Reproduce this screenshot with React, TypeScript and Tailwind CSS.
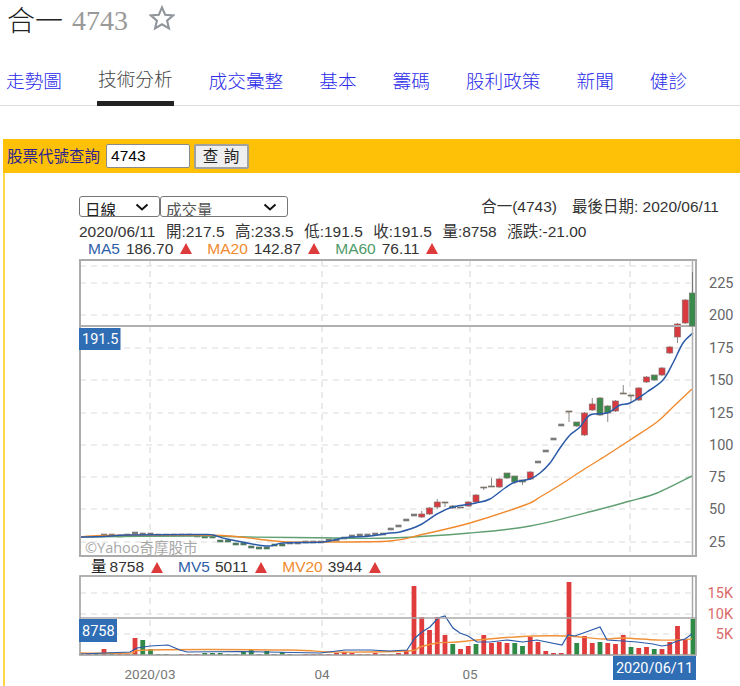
import React from "react";

type P = [number, number];
const X0 = 80.75;
const STEP = 7.75;
const xAt = (i: number) => X0 + STEP * i;

function smooth(pts: P[]) {
  let d = `M${pts[0][0]} ${pts[0][1]}`;
  for (let i = 0; i < pts.length - 1; i++) {
    const p0 = pts[Math.max(0, i - 1)];
    const p1 = pts[i];
    const p2 = pts[i + 1];
    const p3 = pts[Math.min(pts.length - 1, i + 2)];
    const c1x = p1[0] + (p2[0] - p0[0]) / 6;
    const c1y = p1[1] + (p2[1] - p0[1]) / 6;
    const c2x = p2[0] - (p3[0] - p1[0]) / 6;
    const c2y = p2[1] - (p3[1] - p1[1]) / 6;
    d += ` C${c1x.toFixed(1)} ${c1y.toFixed(1)} ${c2x.toFixed(1)} ${c2y.toFixed(1)} ${p2[0]} ${p2[1]}`;
  }
  return d;
}

const MA5: P[] = [[80,537],[103,536.5],[130,535],[200,534.5],[213,535],[227,539],[266,546],[283,543],[323,542],[343,538],[370,536],[390,533],[400,532],[420,525],[437,514],[453,507],[476,503],[490,499],[505,488],[515,482],[530,479],[540,473],[550,463],[560,448],[570,435],[580,427],[590,415],[607,413],[620,405],[630,403],[647,392],[663,380],[673,363],[683,343],[693,333]];
const MA20: P[] = [[80,537],[103,535.5],[186,535],[230,536],[257,539],[287,542],[323,542],[390,541],[420,535],[470,523],[525,505],[540,497],[560,485],[583,470],[607,455],[630,440],[657,422],[673,407],[692,389]];
const MA60: P[] = [[80,537],[200,536],[247,537],[337,538],[390,538],[470,533],[530,526],[597,510],[630,501],[657,493],[692,476]];

const DASHES: [number, number][] = [[3,535],[4,535],[5,536],[6,535],[7,533],[8,534],[9,534],[10,535],[11,535],[12,535],[13,535],[14,535],[15,536],[16,537],[17,537],[18,541],[19,541],[20,544],[21,544],[22,547],[23,548],[24,548],[25,545],[26,545],[27,543],[28,543],[29,542],[30,542],[31,542],[32,540],[33,540],[34,538],[35,536],[36,535],[37,535],[38,534],[39,534],[40,529],[41,526],[42,520],[43,515],[59,462],[60,451],[61,439],[62,425]];

// [index, top, bottom, wickTop, wickBottom, colour]
const CANDLES: [number, number, number, number, number, "r" | "g"][] = [
  [44,514,517,511,518,"r"],[45,508,514,507,515,"r"],[46,502,507,499,509,"r"],[47,502,503,502,507,"g"],[48,506,508,505,509,"g"],[49,507,508,507,508,"g"],[50,502,506,501,507,"r"],[51,495,502,494,503,"r"],
  [52,487,488,487,490,"g"],[53,486,487,478,487,"g"],[54,479,487,478,488,"r"],[55,473,478,473,479,"g"],[56,476,482,476,484,"g"],[57,480,482,480,485,"g"],[58,472,479,471,480,"r"],
  [63,411,412,411,422,"g"],[64,422,426,422,427,"g"],[65,413,435,412,436,"r"],[66,404,410,398,411,"r"],[67,398,415,397,416,"g"],[68,406,413,405,422,"g"],[69,401,411,400,412,"r"],[70,393,394,385,394,"g"],[71,395,396,395,402,"g"],[72,388,400,387,401,"r"],[73,377,382,376,383,"r"],[74,375,380,375,381,"g"],[75,368,375,367,376,"r"],[76,347,353,346,354,"r"],[77,324,337,323,343,"r"],[78,300,323,299,324,"r"],
];

const VOL_TOP = [654,654,653,649,653,654,654,638,640,649,654,654,655,654,654,654,653,653,653,654,654,652,650,654,651,654,652,654,655,654,654,654,654,653,652,653,654,654,653,654,654,653,650,586,617,630,617,635,644,649,646,644,635,643,642,643,643,646,637,642,651,653,653,582,643,636,643,642,643,644,635,647,648,647,649,649,642,626,639,619];
const VOL_GREEN = new Set([2,4,8,9,10,11,16,17,18,19,20,21,22,23,24,25,26,27,28,48,51,56,57,64,67,71,74,79]);
const MV5: P[] = [[80,654],[130,652],[137,648],[150,646],[168,645],[180,650],[187,652],[240,651.5],[320,653],[345,650],[370,650],[390,651],[407,650],[415,638],[422,632],[430,627],[438,618],[445,616],[453,628],[460,633],[468,636],[477,642],[490,642],[507,640],[523,642],[537,640],[562,645],[568,635],[575,636],[600,627],[607,640],[623,641],[637,642],[653,644],[662,646],[668,645],[677,641],[685,639],[692,634]];
const MV20: P[] = [[80,653],[130,653],[150,650],[290,650],[330,652],[407,651],[420,647],[437,643],[457,642],[477,640],[500,638],[533,636],[567,636],[603,639],[623,638],[657,640],[677,640],[692,639]];

const V_GRID = [150, 322, 470, 630];
const AXIS: [string, number][] = [["225",283],["200",315],["175",348],["150",380],["125",413],["100",445],["75",477],["50",509],["25",542]];
const H_GRID = [266, 283, 315, 348, 380, 413, 445, 477, 509, 542];
const V_AXIS: [string, number][] = [["15K",593],["10K",614],["5K",634]];
const AXIS_FONT = { fontFamily: "Roboto, sans-serif" };

function Main() {
  return (
    <svg width={661} height={300} viewBox="79 259 661 300" className="block">
      {H_GRID.map((y) => <line key={y} x1={80} x2={696} y1={y} y2={y} stroke="#dcdcdc" strokeWidth={1.2} strokeDasharray="6 5" />)}
      {V_GRID.map((x) => <line key={x} x1={x} x2={x} y1={260} y2={556} stroke="#dcdcdc" strokeWidth={1.2} strokeDasharray="6 5" />)}
      <text x={85} y={553} fontSize={14.5} fill="#a8a8a8" style={{ fontFamily: "'Open Sans','Noto Sans CJK TC',sans-serif" }}>©Yahoo奇摩股市</text>
      {DASHES.map(([i, y]) => <rect key={i} x={xAt(i) - 3} y={y - 1.3} width={6} height={2.6} fill={i > 15 && i < 27 ? "#4f7a5c" : "#7a7a7a"} />)}
      {CANDLES.map(([i, t, b, wt, wb, c]) => (
        <g key={i}>
          <line x1={xAt(i)} x2={xAt(i)} y1={wt} y2={wb} stroke="#888888" strokeWidth={1} />
          <rect x={xAt(i) - 3} y={t} width={6} height={b - t} fill={c === "r" ? "#d93a40" : "#3a8a4c"} stroke="#8a7070" strokeWidth={0.7} />
        </g>
      ))}
      <path d={smooth(MA60)} fill="none" stroke="#5f9f72" strokeWidth={1.4} />
      <path d={smooth(MA20)} fill="none" stroke="#f08a2e" strokeWidth={1.4} />
      <path d={smooth(MA5)} fill="none" stroke="#2a5aa8" strokeWidth={1.5} />
      <line x1={80} x2={697} y1={326} y2={326} stroke="#b0b0b0" strokeWidth={2} />
      <line x1={692.5} x2={692.5} y1={260} y2={556} stroke="#b0b0b0" strokeWidth={1.5} />
      <line x1={692.5} x2={692.5} y1={272} y2={293} stroke="#777777" strokeWidth={1} />
      <rect x={689.3} y={293} width={6} height={33} fill="#3a8a4c" stroke="#6f7f70" strokeWidth={0.7} />
      <rect x={80} y={260} width={616} height={296} fill="none" stroke="#ababab" strokeWidth={2} />
      {AXIS.map(([t, y]) => <text key={t} x={709} y={y + 5} fontSize={14.5} fill="#666666" style={AXIS_FONT}>{t}</text>)}
      <rect x={79} y={328} width={41.5} height={22} fill="#2f6db5" />
      <text x={82} y={344} fontSize={14.5} fill="#ffffff" style={AXIS_FONT}>191.5</text>
    </svg>
  );
}

function Volume() {
  return (
    <svg width={661} height={111} viewBox="79 575 661 111" className="block">
      {[593, 614, 634].map((y) => <line key={y} x1={80} x2={696} y1={y} y2={y} stroke="#dcdcdc" strokeWidth={1.2} strokeDasharray="6 5" />)}
      {V_GRID.map((x) => <line key={x} x1={x} x2={x} y1={576} y2={655} stroke="#dcdcdc" strokeWidth={1.2} strokeDasharray="6 5" />)}
      {VOL_TOP.map((t, i) => (
        <rect key={i} x={xAt(i) - 2.4} y={t} width={4.8} height={655 - t} fill={VOL_GREEN.has(i) ? "#2f8a45" : "#e03c3c"} />
      ))}
      <path d={smooth(MV20)} fill="none" stroke="#f0913a" strokeWidth={1.4} />
      <path d={`M${MV5.map((p) => p.join(" ")).join("L")}`} fill="none" stroke="#2a5aa8" strokeWidth={1.2} />
      <line x1={80} x2={697} y1={618} y2={618} stroke="#a8a8a8" strokeWidth={1.5} />
      <line x1={692.5} x2={692.5} y1={576} y2={619} stroke="#a8a8a8" strokeWidth={1.5} />
      <rect x={80} y={576} width={616} height={79} fill="none" stroke="#a0a0a0" strokeWidth={1.6} />
      {V_AXIS.map(([t, y]) => <text key={t} x={733} y={y + 5} textAnchor="end" fontSize={14.5} fill="#db6b6b" style={AXIS_FONT}>{t}</text>)}
      <rect x={79} y={619} width={38} height={23} fill="#2f6db5" />
      <text x={82} y={636} fontSize={14.5} fill="#ffffff" style={AXIS_FONT}>8758</text>
      <text x={150} y={679} textAnchor="middle" fontSize={13.5} fill="#777777" style={AXIS_FONT}>2020/03</text>
      <text x={322} y={679} textAnchor="middle" fontSize={13.5} fill="#777777" style={AXIS_FONT}>04</text>
      <text x={470} y={679} textAnchor="middle" fontSize={13.5} fill="#777777" style={AXIS_FONT}>05</text>
      <rect x={613} y={656} width={83} height={24} fill="#2f6db5" />
      <text x={654.5} y={673} textAnchor="middle" fontSize={14.5} fill="#ffffff" style={AXIS_FONT}>2020/06/11</text>
    </svg>
  );
}

const Up = () => (
  <svg width="12" height="11" viewBox="0 0 12 11" className="block">
    <path d="M6 0 L12 11 L0 11 Z" fill="#dd3b3b" />
  </svg>
);

function Chevron() {
  return (
    <svg width="14" height="8" viewBox="0 0 14 8" className="absolute right-[10px] top-[6px] pointer-events-none">
      <path d="M1.5 1.5 L7 6.5 L12.5 1.5" fill="none" stroke="#111111" strokeWidth="2" />
    </svg>
  );
}

const TABS = ["走勢圖", "技術分析", "成交彙整", "基本", "籌碼", "股利政策", "新聞", "健診"];

export default function App() {
  return (
    <div className="w-[740px] h-[686px] overflow-hidden bg-white [font-family:'Liberation_Sans','Noto_Sans_CJK_TC',sans-serif] text-[#333333]">
      <div className="h-[60px] pl-[7px] flex items-start">
        <span className="text-[28px] leading-[38px] text-[#222222] [font-family:'Noto_Sans_CJK_TC',sans-serif] font-light">合一</span>
        <span className="ml-[9px] mt-[2px] text-[28px] leading-[38px] text-[#999999] [font-family:'Liberation_Serif',serif]">4743</span>
        <svg width="26" height="26" viewBox="0 0 24 24" className="ml-[21px] mt-[5px]">
          <path d="M12 2.2 L14.9 9 L22.3 9.6 L16.7 14.4 L18.4 21.6 L12 17.8 L5.6 21.6 L7.3 14.4 L1.7 9.6 L9.1 9 Z" fill="none" stroke="#8f959b" strokeWidth="1.9" strokeLinejoin="miter" />
        </svg>
      </div>
      <div className="h-[46px] pl-[6px] flex items-end gap-9 border-b border-[#dddddd] text-[18.67px] [font-family:'Noto_Sans_CJK_TC',sans-serif] font-light">
        {TABS.map((t, i) =>
          i === 1 ? (
            <span key={t} className="h-[46px] -mx-px px-px -mb-px text-[#444444] border-b-[5px] border-[#222222] leading-[36px]">{t}</span>
          ) : (
            <a key={t} href="#" className="h-[46px] leading-[42px] text-[#2a2ae8]">{t}</a>
          )
        )}
      </div>
      <div className="mt-[33px] ml-[3px] h-[34px] bg-[#ffc107] flex items-center pl-[4px]">
        <span className="text-[15.5px] text-[#2f1f8f] [font-family:'Noto_Sans_CJK_TC',sans-serif]">股票代號查詢</span>
        <input readOnly value="4743" className="ml-[6px] w-[84px] h-[24px] bg-white border border-[#8a8a8a] rounded-[2px] px-[4px] text-[15.5px] text-black" />
        <button className="ml-[4px] w-[55px] h-[25px] bg-[#efefef] border-2 border-[#a0a0a0] rounded-[2px] text-[15.5px] text-[#222222] tracking-[1px] [font-family:'Noto_Sans_CJK_TC',sans-serif] leading-none">查 詢</button>
      </div>
      <div className="ml-[3px] h-[513px] border-l-2 border-[#ffd84a] pl-[74px] pt-[23px]">
        <div className="w-[641px] h-[21px] flex items-center text-[15.5px] leading-none">
          <div className="relative w-[81px] h-[21px] border border-[#767676] rounded-[3px] overflow-hidden">
            <select className="appearance-none w-full h-[27px] pl-[5px] text-[15.5px] leading-[22px] text-[#222222] bg-transparent outline-none"><option>日線</option></select>
            <Chevron />
          </div>
          <div className="relative w-[128px] h-[21px] border border-[#767676] rounded-[3px] overflow-hidden">
            <select className="appearance-none w-full h-[27px] pl-[5px] text-[15.5px] leading-[22px] text-[#555555] bg-transparent outline-none"><option>成交量</option></select>
            <Chevron />
          </div>
          <span className="ml-auto pr-[1px] text-[#333333]">合一(4743)</span>
          <span className="ml-[14px] mr-[1px] whitespace-pre text-[#333333]">最後日期: 2020/06/11</span>
        </div>
        <div className="h-[19px] mt-[5px] flex items-center gap-[10.5px] text-[15.5px] whitespace-nowrap leading-none text-[#333333]">
          <span>2020/06/11</span><span>開:217.5</span><span>高:233.5</span><span>低:191.5</span><span>收:191.5</span><span>量:8758</span><span>漲跌:-21.00</span>
        </div>
        <div className="h-[15px] mb-[3px] pl-[9px] flex items-center text-[15.5px] whitespace-nowrap leading-none">
          <span className="text-[#2f5fa8]">MA5</span><span className="ml-[6px]">186.70</span><span className="ml-[7px]"><Up /></span>
          <span className="ml-[15px] text-[#f08a2e]">MA20</span><span className="ml-[6px]">142.87</span><span className="ml-[7px]"><Up /></span>
          <span className="ml-[15px] text-[#4f9a6a]">MA60</span><span className="ml-[6px]">76.11</span><span className="ml-[7px]"><Up /></span>
        </div>
        <Main />
        <div className="h-[16px] pl-[12px] flex items-center text-[15.5px] whitespace-nowrap leading-none">
          <span className="text-[#222222]">量</span><span className="ml-[3px]">8758</span><span className="ml-[7px]"><Up /></span>
          <span className="ml-[15px] text-[#2f5fa8]">MV5</span><span className="ml-[5px]">5011</span><span className="ml-[7px]"><Up /></span>
          <span className="ml-[15px] text-[#f08a2e]">MV20</span><span className="ml-[5px]">3944</span><span className="ml-[7px]"><Up /></span>
        </div>
        <Volume />
      </div>
    </div>
  );
}
